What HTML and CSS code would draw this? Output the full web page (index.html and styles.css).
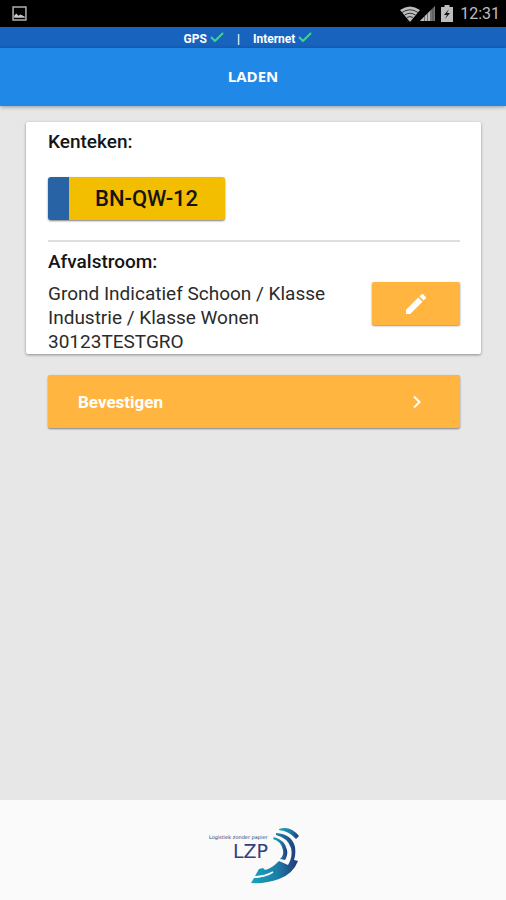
FILE: index.html
```html
<!DOCTYPE html>
<html lang="nl">
<head>
<meta charset="utf-8">
<meta name="viewport" content="width=device-width, initial-scale=1">
<title>Laden</title>
<link rel="stylesheet" href="styles.css">
</head>
<body>
<div class="system-bar">
  <svg class="picture-icon" viewBox="0 0 14 14" aria-hidden="true"><path d="M1 1h12v12H1z" fill="none" stroke="#b0b0b0" stroke-width="1.4"/><path d="M2 11V9l2-2 2 2 2-1 4 2v1z" fill="#c8c8c8"/></svg>
  <div class="system-status">
    <svg class="wifi-icon" viewBox="0 0 20 16" aria-hidden="true"><path d="M0 4Q10-3 20 4L10 16z" fill="#bdbdbd"/><path d="M2 6.500q8-5.500 16 0M4.500 9q5.500-3.500 11 0M7 11.500q3-2 6 0" fill="none" stroke="#222" stroke-width=".9"/></svg>
    <svg class="signal-icon" viewBox="0 0 15 15" aria-hidden="true"><path d="M15 0v15H0z" fill="#777"/><path d="M11 4v11H0z" fill="#bdbdbd"/><path d="M4.500 9v6M7.500 6v9M10.500 4v11M13 2v13" stroke="#222" stroke-width=".5"/></svg>
    <svg class="battery-icon" viewBox="0 0 12 17" aria-hidden="true"><path d="M3.500 0h5v2H12v15H0V2h3.500z" fill="#bdbdbd"/><path d="M8 4L3 10h3l-2 4 5-6H6z" fill="#111"/></svg>
    <span class="clock">12:31</span>
  </div>
</div>
<div class="connection-bar">
  <span class="connection">GPS <svg class="check-icon" viewBox="0 0 14 10" aria-hidden="true"><path d="M1 5l4 4 8-8"/></svg></span>
  <span class="divider">|</span>
  <span class="connection">Internet <svg class="check-icon" viewBox="0 0 14 10" aria-hidden="true"><path d="M1 5l4 4 8-8"/></svg></span>
</div>
<header class="app-bar"><h1>LADEN</h1></header>
<main>
  <section class="card">
    <div class="vehicle">
      <h2>Kenteken:</h2>
      <div class="plate">BN-QW-12</div>
    </div>
    <div class="waste">
      <h2>Afvalstroom:</h2>
      <div class="waste-row">
        <p>Grond Indicatief Schoon / Klasse Industrie / Klasse Wonen 30123TESTGRO</p>
        <button class="edit" type="button" aria-label="Afvalstroom wijzigen"><svg viewBox="3 3 18 18" aria-hidden="true"><path d="M3 17.250V21h3.750L17.810 9.940l-3.750-3.750L3 17.250zM20.710 7.040a1 1 0 0 0 0-1.410l-2.340-2.340a1 1 0 0 0-1.410 0l-1.830 1.830 3.750 3.750 1.830-1.830z"/></svg></button>
      </div>
    </div>
  </section>
  <button class="confirm" type="button"><span>Bevestigen</span><svg viewBox="0 0 10 14" aria-hidden="true"><path d="M2 1.500L7.500 7 2 12.500"/></svg></button>
</main>
<footer>
  <svg class="logo" viewBox="0 0 98 66" role="img" aria-label="LZP">
    <defs><linearGradient id="arc" x1="0" x2="1"><stop offset="0" stop-color="#18a4bb"/><stop offset=".55" stop-color="#1b7fa8"/><stop offset="1" stop-color="#243579"/></linearGradient></defs>
    <text class="tagline" x="5" y="17">Logistiek zonder papier</text>
    <text class="wordmark" x="29" y="36">LZP</text>
    <path d="M75 7Q86 3 95 14L92 17Q85 9 75 8z" fill="url(#arc)"/>
    <path d="M72 11Q88 12 91 25Q92 33 90 38L94 39Q89 52 75 57Q62 62 47 61L50 56Q60 55 66 52Q58 54 51 54L55 47L59 46L61 48Q67 47 75 39L84 43Q89 35 87 26Q84 16 72 13z" fill="url(#arc)"/>
    <path d="M70 15Q81 18 83 28Q84 33 81 38L76 37Q80 34 79 28Q77 19 69 17z" fill="url(#arc)"/>
    <path d="M49 55Q61 55 69 50" fill="none" stroke="#fafafa" stroke-width="1.500"/>
  </svg>
</footer>
</body>
</html>
```
FILE: styles.css
```css
* { box-sizing: border-box; }
body {
  margin: 0;
  min-height: 100vh;
  display: flex;
  flex-direction: column;
  background: #e7e7e7;
  color: #151515;
  font-family: Roboto, "Liberation Sans", sans-serif;
}
h1, h2, p { margin: 0; }
svg { display: block; flex: none; }
button { border: 0; color: #fff; font: inherit; background: #ffb53f; border-radius: 2px; box-shadow: 0 1px 2px rgba(0, 0, 0, .45); }
.system-bar {
  height: 27px;
  padding: 0 6px 0 12px;
  display: flex;
  align-items: center;
  justify-content: space-between;
  background: #000;
}
.picture-icon { width: 15px; height: 15px; }
.system-status { display: flex; align-items: center; color: #bdbdbd; }
.wifi-icon { width: 20px; height: 16px; }
.signal-icon { width: 15px; height: 15px; }
.battery-icon { width: 12px; height: 17px; margin: 0 7px 0 6px; }
.clock { font-size: 16px; line-height: 26px; }
.connection-bar {
  height: 21px;
  display: flex;
  justify-content: center;
  align-items: center;
  gap: 13px;
  padding: 2px 10px 0 0;
  background: #1763be;
  color: #fff;
  font-size: 12px;
  font-weight: 700;
}
.connection { display: flex; align-items: center; gap: 3px; }
.check-icon { width: 14px; height: 10px; margin-bottom: 3px; fill: none; stroke: #42d391; stroke-width: 2; }
.app-bar {
  height: 58px;
  padding-bottom: 2px;
  display: grid;
  place-items: center;
  background: #2088e6;
  color: #fff;
  box-shadow: 0 1px 4px rgba(0, 0, 0, .35);
}
.app-bar h1 { font: 700 15px/20px "Open Sans", sans-serif; }
main { flex: 1; padding: 16px 25px 16px 26px; }
.card { padding: 0 21px 0 22px; background: #fff; border-radius: 2px; box-shadow: 0 1px 3px rgba(0, 0, 0, .4); }
.card h2 { font-size: 19px; font-weight: 500; line-height: 24px; }
.vehicle { padding: 8px 0 20px; border-bottom: 2px solid #dedede; }
.plate {
  width: 177px;
  height: 43px;
  margin-top: 23px;
  padding-left: 26px;
  border-left: 21px solid #2763a5;
  border-radius: 3px;
  background: #f4be00;
  box-shadow: 0 1px 2px rgba(0, 0, 0, .5);
  font-size: 22px;
  font-weight: 500;
  line-height: 43px;
}
.waste { padding: 8px 0 0; }
.waste-row { display: flex; justify-content: space-between; align-items: flex-start; gap: 32px; padding-top: 8px; }
.waste p { font-size: 19px; font-weight: 400; line-height: 24px; color: #2b2b2b; }
.waste-row p { flex: 1; }
.edit { width: 88px; height: 43px; flex: none; padding: 0; display: grid; place-items: center; }
.edit svg { width: 20px; height: 20px; fill: #fff; }
.confirm {
  width: calc(100% - 43px);
  height: 53px;
  margin: 21px 21px 0 22px;
  padding: 0 38px 0 30px;
  display: flex;
  align-items: center;
  justify-content: space-between;
  font-size: 17px;
  font-weight: 700;
}
.confirm svg { width: 10px; height: 14px; fill: none; stroke: #fff; stroke-width: 2; }
footer { height: 100px; padding-top: 22px; background: #fafafa; }
.logo { width: 98px; height: 66px; margin: 0 auto; }
.tagline { font: 5px "DejaVu Sans", sans-serif; fill: #1f3f80; }
.wordmark { font: 19px "DejaVu Sans", sans-serif; fill: #34407f; }
```
